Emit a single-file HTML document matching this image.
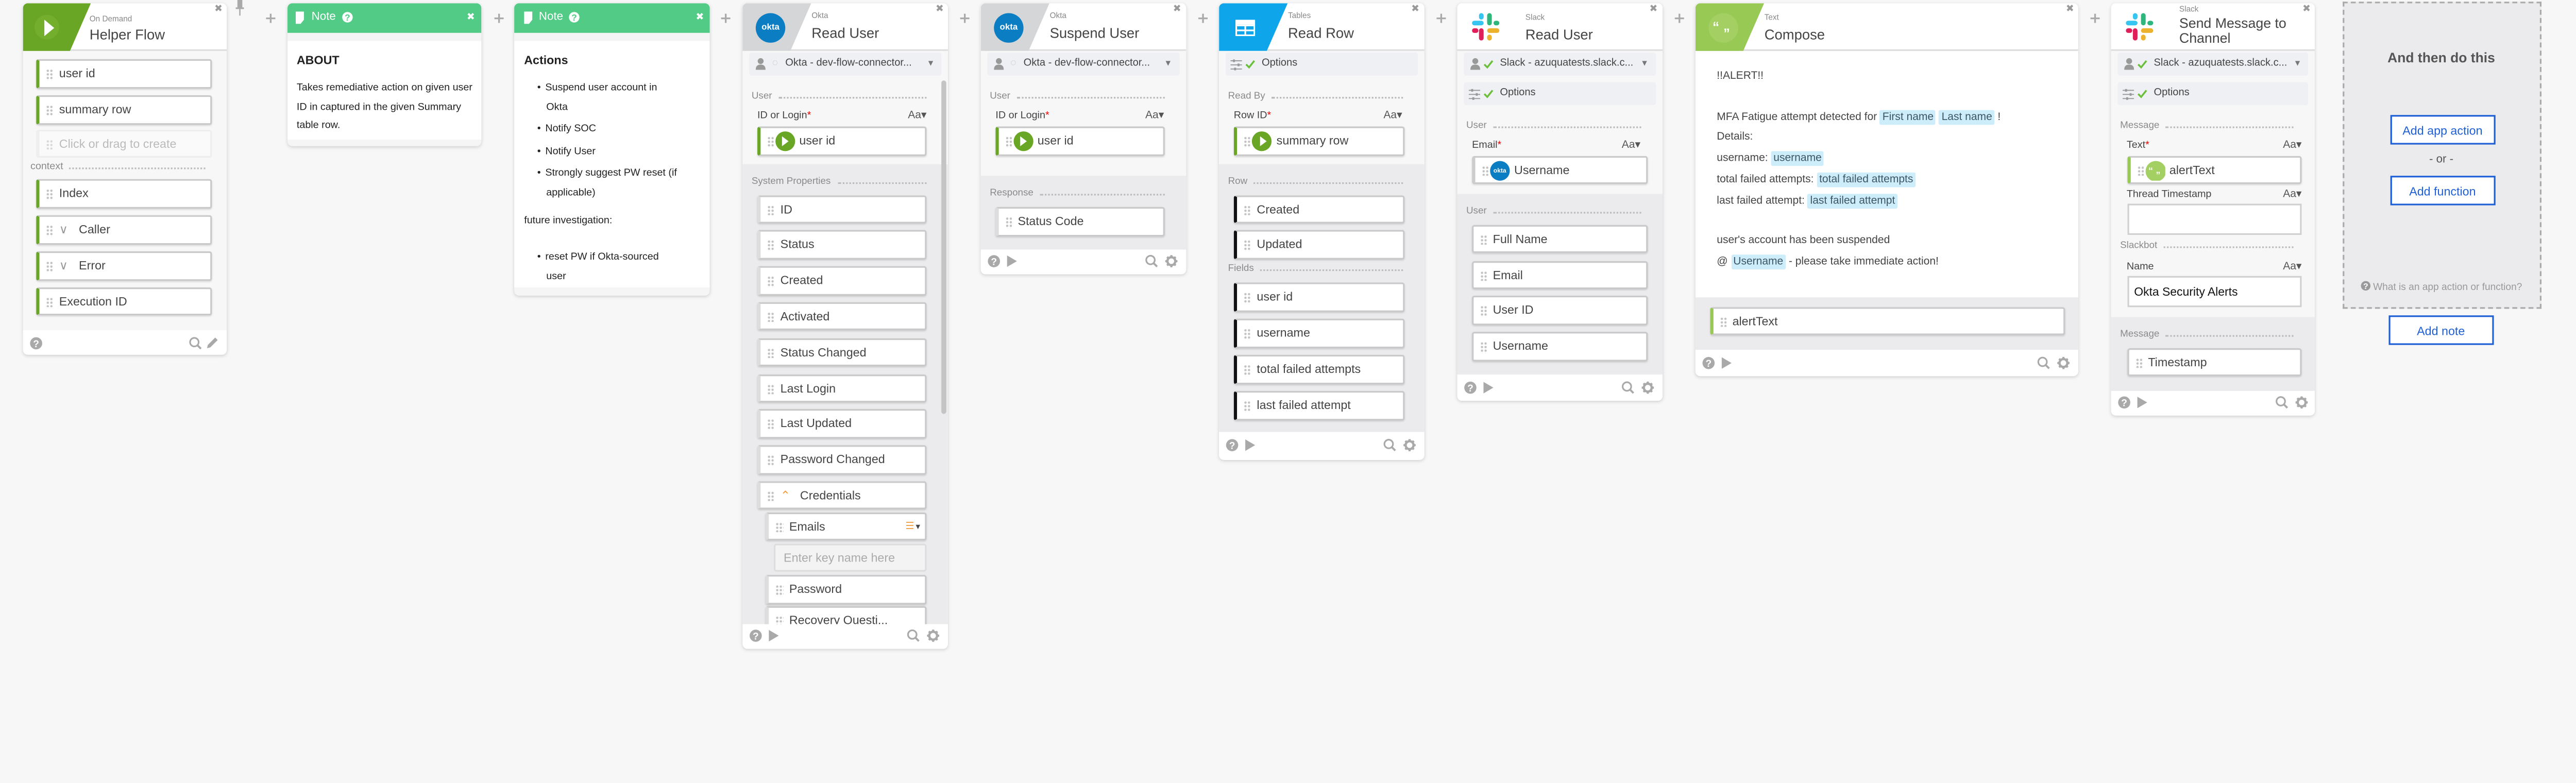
<!DOCTYPE html>
<html><head><meta charset="utf-8">
<style>
html,body{margin:0;padding:0;width:100%;height:100%;overflow:hidden;background:#f7f7f7;}
#r{position:absolute;left:0;top:0;width:1567px;height:436px;transform:scale(3.4783);transform-origin:0 0;font-family:"Liberation Sans","DejaVu Sans",sans-serif;color:#333;overflow:hidden}
.card{position:absolute;background:#fff;border-radius:3px;box-shadow:0 0.6px 2.2px rgba(0,0,0,.16);overflow:hidden}
.hd{position:absolute;left:0;top:0;right:0;height:29.7px;background:#fff;border-bottom:0.5px solid #ddd;box-sizing:border-box}
.hbg{position:absolute;left:0;top:0;width:42px;height:29.7px;clip-path:polygon(0 0,42px 0,29px 100%,0 100%)}
.sm{position:absolute;left:42px;top:6.5px;font-size:4.8px;color:#888;white-space:nowrap}
.tt{position:absolute;left:42px;top:13.3px;font-size:8.6px;color:#444;white-space:nowrap}
.cx{position:absolute;right:2.5px;top:0.5px;font-size:6px;color:#999;font-family:"DejaVu Sans",sans-serif;font-weight:bold}
.sec{position:absolute;left:0;right:0}
.lt{background:#f7f7f7}.dk{background:#ebebed}
.lbl{position:absolute;left:5.5px;right:13px;font-size:5.9px;color:#8a8a8a;height:8px;line-height:8px;display:flex;align-items:center;white-space:nowrap}
.lbl:after{content:"";flex:1;border-top:0.5px dotted #bbb;margin-left:4px}
.fl{position:absolute;font-size:6.2px;color:#444;height:8px;line-height:8px;white-space:nowrap}
.fl b{color:#e00;font-weight:normal}
.aa{position:absolute;font-size:6.6px;color:#555;height:8px;line-height:8px}
.f{position:absolute;height:17.5px;background:#fff;border:0.5px solid #c9c9c9;border-radius:1.5px;box-shadow:0 0.5px 1px rgba(0,0,0,.14);box-sizing:border-box;font-size:7.3px;color:#444;line-height:16.5px;white-space:nowrap;overflow:hidden}
.f .t{position:absolute;left:12px;top:0}
.dd{position:absolute;left:4px;top:5px;width:4.4px;height:6.6px;background:radial-gradient(circle,#c2c2c2 0.6px,transparent 0.8px) 0 0/2.2px 2.2px}
.ft{position:absolute;left:0;right:0;bottom:0;height:15.5px;background:#fff}
.ft svg{position:absolute;top:3.5px}
.conn{position:absolute;left:4px;right:4px;height:14px;background:#eef0f3;border-radius:1.5px;font-size:6.3px;color:#444;line-height:14px;white-space:nowrap}
.plus{position:absolute;top:7px;font-size:9px;color:#aaa;font-weight:bold;font-family:"DejaVu Sans",sans-serif}
.pc{position:absolute;top:2.2px;width:12px;height:12px;border-radius:50%;background:#6aa625}
.pc:after{content:"";position:absolute;left:4.5px;top:3px;border-left:4.5px solid #fff;border-top:3px solid transparent;border-bottom:3px solid transparent}
.tag{background:#cdedfb;padding:1px 1.5px;border-radius:1px;color:#3d5566}
.nh{position:absolute;left:0;right:0;top:0;height:18px;background:#52cb86;color:#fff;font-size:7px;line-height:18px}
.btn{position:absolute;left:28px;width:64.5px;height:18.2px;border:0.6px solid #1f5fd6;background:#fff;box-sizing:border-box;color:#1f5fd6;font-size:7.3px;text-align:center;line-height:17px}
</style></head><body>
<div id="r">

<svg width="0" height="0" style="position:absolute">
<defs>
<g id="help"><circle cx="4" cy="4" r="3.7" fill="#a9a9a9"/><text x="4" y="6.3" font-size="6" font-weight="bold" fill="#fff" text-anchor="middle" font-family="Liberation Sans">?</text></g>
<g id="play"><path d="M1 0.5 L7 4 L1 7.5Z" fill="#a9a9a9"/></g>
<g id="srch"><circle cx="3.3" cy="3.3" r="2.6" fill="none" stroke="#a9a9a9" stroke-width="1"/><path d="M5.2 5.2 L7.3 7.3" stroke="#a9a9a9" stroke-width="1.2"/></g>
<g id="gear"><circle cx="4" cy="4" r="2.4" fill="none" stroke="#a9a9a9" stroke-width="1.4"/><path d="M4 0.3V1.8M4 6.2V7.7M0.3 4H1.8M6.2 4H7.7M1.4 1.4L2.4 2.4M5.6 5.6L6.6 6.6M6.6 1.4L5.6 2.4M1.4 6.6L2.4 5.6" stroke="#a9a9a9" stroke-width="1.3"/></g>
<g id="slack"><rect x="0" y="6.5" width="10" height="4" rx="2" fill="#36c5f0"/><rect x="6" y="0" width="4" height="5.5" rx="2" fill="#36c5f0"/><rect x="13" y="0" width="4" height="10.5" rx="2" fill="#2eb67d"/><rect x="18.5" y="6.5" width="5" height="4" rx="2" fill="#2eb67d"/><rect x="13" y="13" width="10.5" height="4" rx="2" fill="#ecb22e"/><rect x="13" y="18.5" width="4" height="5" rx="2" fill="#ecb22e"/><rect x="6" y="13" width="4" height="10.5" rx="2" fill="#e01e5a"/><rect x="0" y="13" width="5.5" height="4" rx="2" fill="#e01e5a"/></g>
<g id="user"><circle cx="3" cy="2.2" r="1.8" fill="#999"/><path d="M0 7.5 Q0 4.3 3 4.3 Q6 4.3 6 7.5Z" fill="#999"/></g>
<g id="opts"><path d="M0 1H7M0 3.5H7M0 6H7" stroke="#999" stroke-width="0.6"/><rect x="1.5" y="0.2" width="1.2" height="1.6" fill="#999"/><rect x="4.3" y="2.7" width="1.2" height="1.6" fill="#999"/><rect x="2.2" y="5.2" width="1.2" height="1.6" fill="#999"/></g>
<g id="chk"><path d="M0.5 3.2 L2.3 5 L5.5 1" fill="none" stroke="#6cbf3a" stroke-width="1.1"/></g>
<g id="quo"><circle cx="9" cy="9" r="9" fill="#a3cf63"/><text x="2.5" y="11" font-size="8" font-weight="bold" fill="#fff" font-family="Liberation Sans">“</text><text x="9" y="15" font-size="8" font-weight="bold" fill="#fff" font-family="Liberation Sans">”</text></g>
</defs></svg>

<svg style="position:absolute;left:142px;top:0" width="8" height="10"><rect x="2.5" y="0" width="3" height="5" fill="#aaa"/><rect x="1.5" y="4.5" width="5" height="1" fill="#aaa"/><rect x="3.6" y="5.5" width="0.8" height="4" fill="#aaa"/></svg>

<div class="plus" style="left:161px">+</div>
<div class="plus" style="left:300px">+</div>
<div class="plus" style="left:438px">+</div>
<div class="plus" style="left:583.5px">+</div>
<div class="plus" style="left:728.5px">+</div>
<div class="plus" style="left:873.5px">+</div>
<div class="plus" style="left:1018.5px">+</div>
<div class="plus" style="left:1271.5px">+</div>

<!-- Helper Flow -->
<div class="card" style="left:13.5px;top:1.5px;width:124.5px;height:214.5px;background:#f7f7f7">
 <div class="hd"><div class="hbg" style="background:#6aa625"></div>
  <div style="position:absolute;left:7.5px;top:7.5px;width:15px;height:15px;border-radius:50%;background:#73ae2c"></div>
  <div style="position:absolute;left:13px;top:10px;border-left:6.5px solid #fff;border-top:5px solid transparent;border-bottom:5px solid transparent"></div>
  <div class="sm" style="left:41px;top:8px">On Demand</div><div class="tt" style="left:41px;top:14.5px">Helper Flow</div><div class="cx">✖</div></div>
 <div class="f" style="left:8.5px;top:34.5px;width:107px;border-left:2.2px solid #6aa625"><span class="dd"></span><span class="t">user id</span></div>
 <div class="f" style="left:8.5px;top:56.5px;width:107px;border-left:2.2px solid #6aa625"><span class="dd"></span><span class="t">summary row</span></div>
 <div class="f" style="left:8.5px;top:77.3px;width:107px;border-left:2.2px solid #b7d793;background:#fafafa;box-shadow:none;border-color:#eee;color:#bbb"><span class="dd" style="opacity:.6"></span><span class="t">Click or drag to create</span></div>
 <div class="lbl" style="left:5px;top:96.5px;font-size:6.2px">context</div>
 <div class="f" style="left:8.5px;top:107.5px;width:107px;border-left:2.2px solid #6aa625"><span class="dd"></span><span class="t">Index</span></div>
 <div class="f" style="left:8.5px;top:129.5px;width:107px;border-left:2.2px solid #6aa625"><span class="dd"></span><span class="t" style="color:#999">∨</span><span class="t" style="left:24px">Caller</span></div>
 <div class="f" style="left:8.5px;top:151.5px;width:107px;border-left:2.2px solid #6aa625"><span class="dd"></span><span class="t" style="color:#999">∨</span><span class="t" style="left:24px">Error</span></div>
 <div class="f" style="left:8.5px;top:173px;width:107px;border-left:2.2px solid #6aa625"><span class="dd"></span><span class="t">Execution ID</span></div>
 <div class="ft" style="height:15px"><svg style="left:4px" width="8" height="8"><use href="#help"/></svg><svg style="left:101px" width="8" height="8"><use href="#srch"/></svg>
 <svg style="left:111px" width="8" height="8"><path d="M1 7 L1.5 5 L6 0.5 L7.5 2 L3 6.5Z" fill="#a9a9a9"/></svg></div>
</div>

<!-- Note 1 -->
<div class="card" style="left:174.6px;top:1.5px;width:118px;height:87.5px;background:#f5f5f5">
 <div class="nh"><svg style="position:absolute;left:5.5px;top:5px" width="6" height="8"><path d="M0 0H5V5L3 7.5H0Z" fill="#fff"/></svg><span style="position:absolute;left:15px">Note</span>
 <svg style="position:absolute;left:33px;top:5.5px" width="7" height="7"><circle cx="3.5" cy="3.5" r="3.2" fill="#fff"/><text x="3.5" y="5.6" font-size="5.5" font-weight="bold" fill="#52cb86" text-anchor="middle" font-family="Liberation Sans">?</text></svg>
 <span style="position:absolute;right:3.5px;font-size:6px;font-weight:bold;font-family:'DejaVu Sans'">✖</span></div>
 <div style="position:absolute;left:0;right:0;top:23.5px;height:59.5px;background:#fff">
  <div style="position:absolute;left:6px;top:7px;font-size:7.3px;font-weight:bold;color:#222">ABOUT</div>
  <div style="position:absolute;left:6px;top:23.2px;width:110px;font-size:6.2px;line-height:11.5px;color:#222">Takes remediative action on given user ID in captured in the given Summary table row.</div>
 </div>
</div>

<!-- Note 2 -->
<div class="card" style="left:313px;top:1.5px;width:119px;height:178.5px;background:#f5f5f5">
 <div class="nh"><svg style="position:absolute;left:5.5px;top:5px" width="6" height="8"><path d="M0 0H5V5L3 7.5H0Z" fill="#fff"/></svg><span style="position:absolute;left:15px">Note</span>
 <svg style="position:absolute;left:33px;top:5.5px" width="7" height="7"><circle cx="3.5" cy="3.5" r="3.2" fill="#fff"/><text x="3.5" y="5.6" font-size="5.5" font-weight="bold" fill="#52cb86" text-anchor="middle" font-family="Liberation Sans">?</text></svg>
 <span style="position:absolute;right:3.5px;font-size:6px;font-weight:bold;font-family:'DejaVu Sans'">✖</span></div>
 <div style="position:absolute;left:0;right:0;top:23.5px;height:149.5px;background:#fff;font-size:6.2px;color:#222">
  <div style="position:absolute;left:6px;top:7px;font-size:7.3px;font-weight:bold">Actions</div>
  <div style="position:absolute;left:14px;top:23.2px;line-height:11.5px">• <span style="margin-left:1px">Suspend user account in</span><br><span style="margin-left:5.5px">Okta</span></div>
  <div style="position:absolute;left:14px;top:48px;line-height:11.5px">• <span style="margin-left:1px">Notify SOC</span></div>
  <div style="position:absolute;left:14px;top:61.5px;line-height:11.5px">• <span style="margin-left:1px">Notify User</span></div>
  <div style="position:absolute;left:14px;top:75px;line-height:11.5px">• <span style="margin-left:1px">Strongly suggest PW reset (if</span><br><span style="margin-left:5.5px">applicable)</span></div>
  <div style="position:absolute;left:6px;top:106px">future investigation:</div>
  <div style="position:absolute;left:14px;top:126px;line-height:11.5px">• <span style="margin-left:1px">reset PW if Okta-sourced</span><br><span style="margin-left:5.5px">user</span></div>
 </div>
</div>

<!-- Okta Read User -->
<div class="card" style="left:452px;top:1.5px;width:125px;height:393.5px">
 <div class="hd"><div class="hbg" style="background:#d5d6d8"></div>
  <div style="position:absolute;left:8px;top:6px;width:18px;height:18px;border-radius:50%;background:#0b7dc3;color:#fff;font-size:5.3px;font-weight:bold;text-align:center;line-height:18px">okta</div>
  <div class="sm">Okta</div><div class="tt">Read User</div><div class="cx">✖</div></div>
 <div class="sec lt" style="top:29.7px;height:69px"></div>
 <div class="sec dk" style="top:98.5px;height:280px"></div>
 <div class="conn" style="top:30.5px"><svg style="position:absolute;left:3.5px;top:3px" width="6" height="8"><use href="#user"/></svg><span style="position:absolute;left:14px;color:#bbb;font-size:6px">◌</span><span style="position:absolute;left:22px">Okta - dev-flow-connector...</span><span style="position:absolute;right:4px;font-size:5px;color:#777">▼</span></div>
 <div class="lbl" style="top:53.5px">User</div>
 <div class="fl" style="left:9px;top:65.5px">ID or Login<b>*</b></div><div class="aa" style="right:13px;top:65.5px">Aa▾</div>
 <div class="f" style="left:8.5px;top:75.5px;width:103.5px;border-left:2.2px solid #6aa625"><span class="dd"></span><span class="pc" style="left:9px"></span><span class="t" style="left:24px">user id</span></div>
 <div class="lbl" style="top:105.5px">System Properties</div>
 <div class="f" style="left:9px;top:117px;width:103px;border-left:2.2px solid #ddd"><span class="dd"></span><span class="t">ID</span></div>
 <div class="f" style="left:9px;top:138.8px;width:103px;border-left:2.2px solid #ddd"><span class="dd"></span><span class="t">Status</span></div>
 <div class="f" style="left:9px;top:160.6px;width:103px;border-left:2.2px solid #ddd"><span class="dd"></span><span class="t">Created</span></div>
 <div class="f" style="left:9px;top:182.4px;width:103px;border-left:2.2px solid #ddd"><span class="dd"></span><span class="t">Activated</span></div>
 <div class="f" style="left:9px;top:204.2px;width:103px;border-left:2.2px solid #ddd"><span class="dd"></span><span class="t">Status Changed</span></div>
 <div class="f" style="left:9px;top:226px;width:103px;border-left:2.2px solid #ddd"><span class="dd"></span><span class="t">Last Login</span></div>
 <div class="f" style="left:9px;top:247.8px;width:103px;border-left:2.2px solid #ddd"><span class="dd"></span><span class="t">Last Updated</span></div>
 <div class="f" style="left:9px;top:269.6px;width:103px;border-left:2.2px solid #ddd"><span class="dd"></span><span class="t">Password Changed</span></div>
 <div class="f" style="left:9px;top:291.4px;width:103px;border-left:2.2px solid #ddd"><span class="dd"></span><span class="t" style="color:#f0a040">⌃</span><span class="t" style="left:24px">Credentials</span></div>
 <div class="f" style="left:14.4px;top:310px;width:97.6px;border-left:2.2px solid #ddd"><span class="dd"></span><span class="t">Emails</span><span class="t" style="left:auto;right:2px;color:#f0a040;font-size:6px">☰<span style="color:#444;font-size:4.5px">▼</span></span></div>
 <div class="f" style="left:19px;top:329px;width:93px;background:#f3f3f3;box-shadow:none;border-color:#ddd;color:#aaa"><span class="t" style="left:5px">Enter key name here</span></div>
 <div class="f" style="left:14.4px;top:348.5px;width:97.6px;border-left:2.2px solid #ddd"><span class="dd"></span><span class="t">Password</span></div>
 <div class="f" style="left:14.4px;top:367.5px;width:97.6px;border-left:2.2px solid #ddd"><span class="dd"></span><span class="t">Recovery Questi...</span></div>
 <div style="position:absolute;left:120.5px;top:47.5px;width:3.5px;height:203px;background:#c4c4c4;border-radius:2px"></div>
 <div class="ft"><svg style="left:4px" width="8" height="8"><use href="#help"/></svg><svg style="left:15px" width="8" height="8"><use href="#play"/></svg><svg style="left:100px" width="8" height="8"><use href="#srch"/></svg><svg style="left:112px" width="8" height="8"><use href="#gear"/></svg></div>
</div>

<!-- Okta Suspend User -->
<div class="card" style="left:597px;top:1.5px;width:124.5px;height:165.5px">
 <div class="hd"><div class="hbg" style="background:#d5d6d8"></div>
  <div style="position:absolute;left:8px;top:6px;width:18px;height:18px;border-radius:50%;background:#0b7dc3;color:#fff;font-size:5.3px;font-weight:bold;text-align:center;line-height:18px">okta</div>
  <div class="sm">Okta</div><div class="tt">Suspend User</div><div class="cx">✖</div></div>
 <div class="sec lt" style="top:29.7px;height:76px"></div>
 <div class="sec dk" style="top:105.5px;height:45px"></div>
 <div class="conn" style="top:30.5px"><svg style="position:absolute;left:3.5px;top:3px" width="6" height="8"><use href="#user"/></svg><span style="position:absolute;left:14px;color:#bbb;font-size:6px">◌</span><span style="position:absolute;left:22px">Okta - dev-flow-connector...</span><span style="position:absolute;right:4px;font-size:5px;color:#777">▼</span></div>
 <div class="lbl" style="top:53.5px">User</div>
 <div class="fl" style="left:9px;top:65.5px">ID or Login<b>*</b></div><div class="aa" style="right:13px;top:65.5px">Aa▾</div>
 <div class="f" style="left:8.5px;top:75.5px;width:103.5px;border-left:2.2px solid #6aa625"><span class="dd"></span><span class="pc" style="left:9px"></span><span class="t" style="left:24px">user id</span></div>
 <div class="lbl" style="top:112.5px">Response</div>
 <div class="f" style="left:8.5px;top:124.5px;width:103.5px;border-left:2.2px solid #ddd"><span class="dd"></span><span class="t">Status Code</span></div>
 <div class="ft"><svg style="left:4px" width="8" height="8"><use href="#help"/></svg><svg style="left:15px" width="8" height="8"><use href="#play"/></svg><svg style="left:100px" width="8" height="8"><use href="#srch"/></svg><svg style="left:112px" width="8" height="8"><use href="#gear"/></svg></div>
</div>

<!-- Tables Read Row -->
<div class="card" style="left:742px;top:1.5px;width:124.5px;height:278.5px">
 <div class="hd"><div class="hbg" style="background:#0ea5ea"></div>
  <svg style="position:absolute;left:10px;top:10px" width="12" height="10"><rect x="0.5" y="0.5" width="11" height="9" fill="none" stroke="#fff" stroke-width="1"/><path d="M0.5 3.5H11.5M0.5 6.5H11.5M6 3.5V9.5" stroke="#fff" stroke-width="1"/><rect x="0.5" y="0.5" width="11" height="2.5" fill="#fff"/></svg>
  <div class="sm">Tables</div><div class="tt">Read Row</div><div class="cx">✖</div></div>
 <div class="sec lt" style="top:29.7px;height:69px"></div>
 <div class="sec dk" style="top:98.5px;height:163px"></div>
 <div class="conn" style="top:30.5px"><svg style="position:absolute;left:3px;top:3.5px" width="7" height="7"><use href="#opts"/></svg><svg style="position:absolute;left:12px;top:4px" width="6" height="6"><use href="#chk"/></svg><span style="position:absolute;left:22px">Options</span></div>
 <div class="lbl" style="top:53.5px">Read By</div>
 <div class="fl" style="left:9px;top:65.5px">Row ID<b>*</b></div><div class="aa" style="right:13px;top:65.5px">Aa▾</div>
 <div class="f" style="left:9px;top:75.5px;width:103.5px;border-left:2.2px solid #6aa625"><span class="dd"></span><span class="pc" style="left:9px"></span><span class="t" style="left:24px">summary row</span></div>
 <div class="lbl" style="top:105.5px">Row</div>
 <div class="f" style="left:9px;top:117px;width:103.5px;border-left:2.2px solid #111"><span class="dd"></span><span class="t">Created</span></div>
 <div class="f" style="left:9px;top:138.8px;width:103.5px;border-left:2.2px solid #111"><span class="dd"></span><span class="t">Updated</span></div>
 <div class="lbl" style="top:158.5px">Fields</div>
 <div class="f" style="left:9px;top:170.5px;width:103.5px;border-left:2.2px solid #111"><span class="dd"></span><span class="t">user id</span></div>
 <div class="f" style="left:9px;top:192.5px;width:103.5px;border-left:2.2px solid #111"><span class="dd"></span><span class="t">username</span></div>
 <div class="f" style="left:9px;top:214.5px;width:103.5px;border-left:2.2px solid #111"><span class="dd"></span><span class="t">total failed attempts</span></div>
 <div class="f" style="left:9px;top:236.5px;width:103.5px;border-left:2.2px solid #111"><span class="dd"></span><span class="t">last failed attempt</span></div>
 <div class="ft" style="height:17px"><svg style="left:4px" width="8" height="8"><use href="#help"/></svg><svg style="left:15px" width="8" height="8"><use href="#play"/></svg><svg style="left:100px" width="8" height="8"><use href="#srch"/></svg><svg style="left:112px" width="8" height="8"><use href="#gear"/></svg></div>
</div>

<!-- Slack Read User -->
<div class="card" style="left:887px;top:1.5px;width:124.5px;height:242.5px">
 <div class="hd"><svg style="position:absolute;left:8.5px;top:6px" width="17" height="17" viewBox="0 0 24 24"><use href="#slack"/></svg>
  <div class="sm" style="left:41.5px;top:7.5px">Slack</div><div class="tt" style="left:41.5px;top:14.5px">Read User</div><div class="cx">✖</div></div>
 <div class="sec lt" style="top:29.7px;height:87px"></div>
 <div class="sec dk" style="top:116.5px;height:110px"></div>
 <div class="conn" style="top:30.5px"><svg style="position:absolute;left:3.5px;top:3px" width="6" height="8"><use href="#user"/></svg><svg style="position:absolute;left:12px;top:4px" width="6" height="6"><use href="#chk"/></svg><span style="position:absolute;left:22px">Slack - azuquatests.slack.c...</span><span style="position:absolute;right:4px;font-size:5px;color:#777">▼</span></div>
 <div class="conn" style="top:48.5px"><svg style="position:absolute;left:3px;top:3.5px" width="7" height="7"><use href="#opts"/></svg><svg style="position:absolute;left:12px;top:4px" width="6" height="6"><use href="#chk"/></svg><span style="position:absolute;left:22px">Options</span></div>
 <div class="lbl" style="top:71.5px">User</div>
 <div class="fl" style="left:9px;top:83.5px">Email<b>*</b></div><div class="aa" style="right:13px;top:83.5px">Aa▾</div>
 <div class="f" style="left:8.7px;top:93px;width:107px;border-left:2.2px solid #ccc"><span class="dd"></span><span style="position:absolute;left:9px;top:2px;width:12.5px;height:12.5px;border-radius:50%;background:#0b7dc3;color:#fff;font-size:3.8px;font-weight:bold;text-align:center;line-height:12.5px">okta</span><span class="t" style="left:24px">Username</span></div>
 <div class="lbl" style="top:123.5px">User</div>
 <div class="f" style="left:8.7px;top:135px;width:107px"><span class="dd"></span><span class="t">Full Name</span></div>
 <div class="f" style="left:8.7px;top:157px;width:107px"><span class="dd"></span><span class="t">Email</span></div>
 <div class="f" style="left:8.7px;top:178.5px;width:107px"><span class="dd"></span><span class="t">User ID</span></div>
 <div class="f" style="left:8.7px;top:200.5px;width:107px"><span class="dd"></span><span class="t">Username</span></div>
 <div class="ft" style="height:16px"><svg style="left:4px" width="8" height="8"><use href="#help"/></svg><svg style="left:15px" width="8" height="8"><use href="#play"/></svg><svg style="left:100px" width="8" height="8"><use href="#srch"/></svg><svg style="left:112px" width="8" height="8"><use href="#gear"/></svg></div>
</div>

<!-- Compose -->
<div class="card" style="left:1032px;top:1.5px;width:233px;height:227.5px">
 <div class="hd"><div class="hbg" style="background:#99c955"></div>
  <svg style="position:absolute;left:8px;top:6px" width="18" height="18"><use href="#quo"/></svg>
  <div class="sm" style="top:7.5px">Text</div><div class="tt" style="top:14.5px">Compose</div><div class="cx">✖</div></div>
 <div style="position:absolute;left:13px;top:0;font-size:6.6px;color:#444;white-space:nowrap">
  <div style="position:absolute;top:41.5px">!!ALERT!!</div>
  <div style="position:absolute;top:66.5px">MFA Fatigue attempt detected for <span class="tag">First name</span> <span class="tag">Last name</span> !</div>
  <div style="position:absolute;top:78.5px">Details:</div>
  <div style="position:absolute;top:91.5px">username: <span class="tag">username</span></div>
  <div style="position:absolute;top:104px">total failed attempts: <span class="tag">total failed attempts</span></div>
  <div style="position:absolute;top:117px">last failed attempt: <span class="tag">last failed attempt</span></div>
  <div style="position:absolute;top:141.5px">user's account has been suspended</div>
  <div style="position:absolute;top:154.5px">@ <span class="tag">Username</span> - please take immediate action!</div>
 </div>
 <div class="sec dk" style="top:179px;height:32.5px"></div>
 <div class="f" style="left:8.5px;top:185px;width:216px;border-left:2.2px solid #99c955"><span class="dd"></span><span class="t">alertText</span></div>
 <div class="ft" style="height:16px"><svg style="left:4px" width="8" height="8"><use href="#help"/></svg><svg style="left:15px" width="8" height="8"><use href="#play"/></svg><svg style="left:208px" width="8" height="8"><use href="#srch"/></svg><svg style="left:220px" width="8" height="8"><use href="#gear"/></svg></div>
</div>

<!-- Send Message -->
<div class="card" style="left:1285px;top:1.5px;width:124px;height:251.5px">
 <div class="hd"><svg style="position:absolute;left:8.5px;top:6px" width="17" height="17" viewBox="0 0 24 24"><use href="#slack"/></svg>
  <div class="sm" style="left:41.5px;top:2.5px">Slack</div><div class="tt" style="left:41.5px;top:8px;line-height:9px;font-size:8.4px">Send Message to<br>Channel</div><div class="cx">✖</div></div>
 <div class="sec lt" style="top:29.7px;height:162px"></div>
 <div class="sec dk" style="top:191.5px;height:45px"></div>
 <div class="conn" style="top:30.5px"><svg style="position:absolute;left:3.5px;top:3px" width="6" height="8"><use href="#user"/></svg><svg style="position:absolute;left:12px;top:4px" width="6" height="6"><use href="#chk"/></svg><span style="position:absolute;left:22px">Slack - azuquatests.slack.c...</span><span style="position:absolute;right:4px;font-size:5px;color:#777">▼</span></div>
 <div class="conn" style="top:48.5px"><svg style="position:absolute;left:3px;top:3.5px" width="7" height="7"><use href="#opts"/></svg><svg style="position:absolute;left:12px;top:4px" width="6" height="6"><use href="#chk"/></svg><span style="position:absolute;left:22px">Options</span></div>
 <div class="lbl" style="top:71.5px">Message</div>
 <div class="fl" style="left:9.5px;top:83.5px">Text<b>*</b></div><div class="aa" style="right:8px;top:83.5px">Aa▾</div>
 <div class="f" style="left:9.5px;top:93px;width:106.3px;border-left:2.2px solid #99c955"><span class="dd"></span><svg style="position:absolute;left:9px;top:2px" width="12.5" height="12.5" viewBox="0 0 18 18"><use href="#quo"/></svg><span class="t" style="left:24px">alertText</span></div>
 <div class="fl" style="left:9.5px;top:113.5px">Thread Timestamp</div><div class="aa" style="right:8px;top:113.5px">Aa▾</div>
 <div style="position:absolute;left:9.5px;top:122.5px;width:106.3px;height:19px;background:#fff;border:0.5px solid #d0d0d0;box-sizing:border-box"></div>
 <div class="lbl" style="top:144.5px">Slackbot</div>
 <div class="fl" style="left:9.5px;top:157.5px">Name</div><div class="aa" style="right:8px;top:157.5px">Aa▾</div>
 <div style="position:absolute;left:9.5px;top:166.5px;width:106.3px;height:19px;background:#fff;border:0.5px solid #d0d0d0;box-sizing:border-box;font-size:7.2px;color:#111;line-height:18px;padding-left:3.5px;white-space:nowrap">Okta Security Alerts</div>
 <div class="lbl" style="top:198.5px">Message</div>
 <div class="f" style="left:9.5px;top:210px;width:106.3px"><span class="dd"></span><span class="t">Timestamp</span></div>
 <div class="ft"><svg style="left:4px" width="8" height="8"><use href="#help"/></svg><svg style="left:15px" width="8" height="8"><use href="#play"/></svg><svg style="left:100px" width="8" height="8"><use href="#srch"/></svg><svg style="left:112px" width="8" height="8"><use href="#gear"/></svg></div>
</div>

<!-- And then do this -->
<div style="position:absolute;left:1425.5px;top:1px;width:121px;height:186.5px;background:#ebebed;border:0.6px dashed #aaa;box-sizing:border-box">
 <div style="position:absolute;left:0;right:0;top:27.5px;text-align:center;font-size:8.3px;font-weight:bold;color:#555">And then do this</div>
 <div class="btn" style="top:67.8px">Add app action</div>
 <div style="position:absolute;left:0;right:0;top:91.5px;text-align:center;font-size:7px;color:#555">- or -</div>
 <div class="btn" style="top:104.6px">Add function</div>
 <div style="position:absolute;left:0;right:0;top:168.5px;text-align:center;font-size:6px;color:#999;white-space:nowrap"><svg width="6" height="6" style="vertical-align:-0.5px"><circle cx="3" cy="3" r="2.9" fill="#999"/><text x="3" y="4.9" font-size="5" font-weight="bold" fill="#fff" text-anchor="middle" font-family="Liberation Sans">?</text></svg> What is an app action or function?</div>
</div>
<div class="btn" style="left:1453.5px;top:192px">Add note</div>

</div>
<script>
(function(){var w=window.innerWidth||document.documentElement.clientWidth||5454;document.getElementById('r').style.transform='scale('+(w/1568)+')';})();
</script>
</body></html>
